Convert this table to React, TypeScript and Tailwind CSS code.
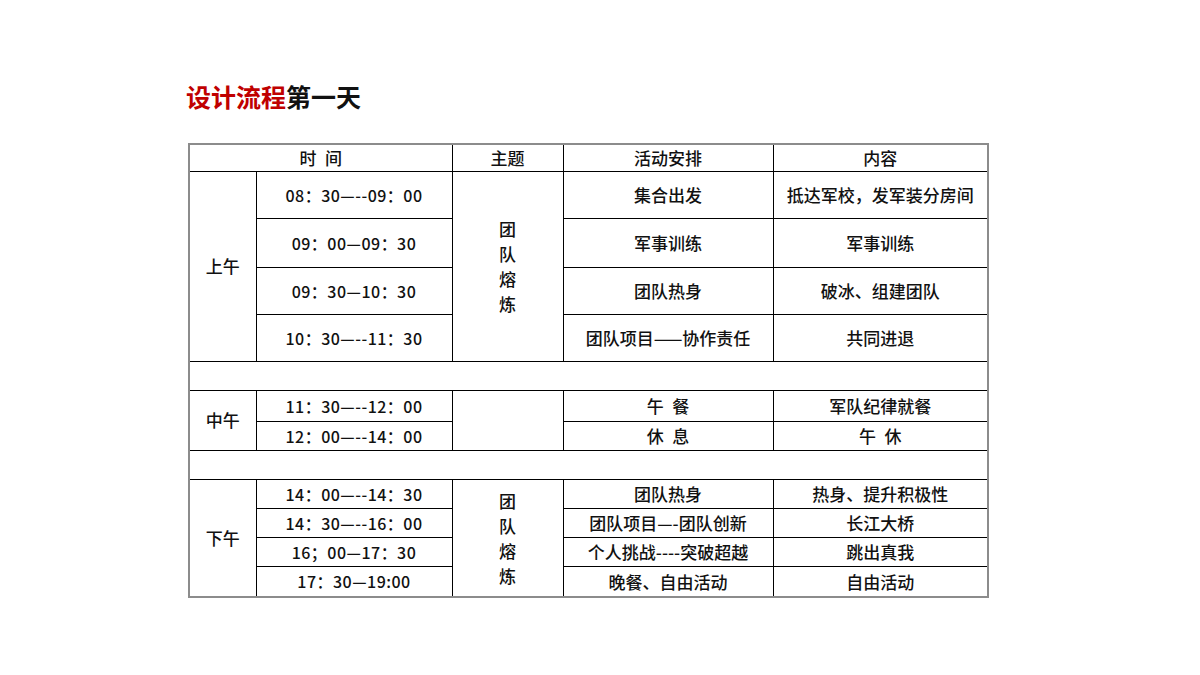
const font = { fontFamily: '"Noto Sans CJK SC", "Noto Sans", sans-serif' };

type Row = { time: string; act: string; content: string; h: string };

const morning: Row[] = [
  { time: '08：30—--09：00', act: '集合出发', content: '抵达军校，发军装分房间', h: 'h-[47px]' },
  { time: '09：00—09：30', act: '军事训练', content: '军事训练', h: 'h-[49px]' },
  { time: '09：30—10：30', act: '团队热身', content: '破冰、组建团队', h: 'h-[47px]' },
  { time: '10：30—--11：30', act: '团队项目——协作责任', content: '共同进退', h: 'h-[47px]' },
];

const noon: Row[] = [
  { time: '11：30—--12：00', act: '午\u2002餐', content: '军队纪律就餐', h: 'h-[31px]' },
  { time: '12：00—--14：00', act: '休\u2002息', content: '午\u2002休', h: 'h-[29px]' },
];

const afternoon: Row[] = [
  { time: '14：00—--14：30', act: '团队热身', content: '热身、提升积极性', h: 'h-[29px]' },
  { time: '14：30—--16：00', act: '团队项目—-团队创新', content: '长江大桥', h: 'h-[29px]' },
  { time: '16；00—17：30', act: '个人挑战----突破超越', content: '跳出真我', h: 'h-[29px]' },
  { time: '17：30—19:00', act: '晚餐、自由活动', content: '自由活动', h: 'h-[30px]' },
];

const td = 'border border-black p-0 text-center align-middle';

function Theme() {
  return (
    <div className="flex flex-col items-center leading-[25px]">
      <span>团</span>
      <span>队</span>
      <span>熔</span>
      <span>炼</span>
    </div>
  );
}

function Block({ name, rows, theme }: { name: string; rows: Row[]; theme: boolean }) {
  return (
    <>
      {rows.map((row, i) => (
        <tr key={row.time} className={row.h}>
          {i === 0 && (
            <td rowSpan={rows.length} className={td}>
              {name}
            </td>
          )}
          <td className={`${td} text-[16px] tracking-[0.03em]`}>{row.time}</td>
          {i === 0 && (
            <td rowSpan={rows.length} className={td}>
              {theme && <Theme />}
            </td>
          )}
          <td className={`${td} whitespace-nowrap`}>{row.act}</td>
          <td className={`${td} whitespace-nowrap`}>{row.content}</td>
        </tr>
      ))}
    </>
  );
}

export default function App() {
  return (
    <div className="h-[675px] w-[1200px] bg-white text-[#111]" style={font}>
      <div className="pl-[186px] pt-[80px]">
        <h1 className="text-[25px] font-bold leading-[32px]">
          <span className="text-[#c00000]">设计流程</span>
          <span>第一天</span>
        </h1>
        <div className="ml-[2px] mt-[31px] w-[801px] border-2 border-[#8c8c8c]">
          <table className="w-full table-fixed border-collapse border-hidden text-[17px] font-medium">
            <colgroup>
              <col className="w-[66px]" />
              <col className="w-[196px]" />
              <col className="w-[111px]" />
              <col className="w-[210px]" />
              <col className="w-[214px]" />
            </colgroup>
            <tbody>
              <tr className="h-[26px]">
                <td colSpan={2} className={td}>
                  时&ensp;间
                </td>
                <td className={td}>主题</td>
                <td className={td}>活动安排</td>
                <td className={td}>内容</td>
              </tr>
              <Block name="上午" rows={morning} theme />
              <tr className="h-[29px]">
                <td colSpan={5} className={td} />
              </tr>
              <Block name="中午" rows={noon} theme={false} />
              <tr className="h-[29px]">
                <td colSpan={5} className={td} />
              </tr>
              <Block name="下午" rows={afternoon} theme />
            </tbody>
          </table>
        </div>
      </div>
    </div>
  );
}
